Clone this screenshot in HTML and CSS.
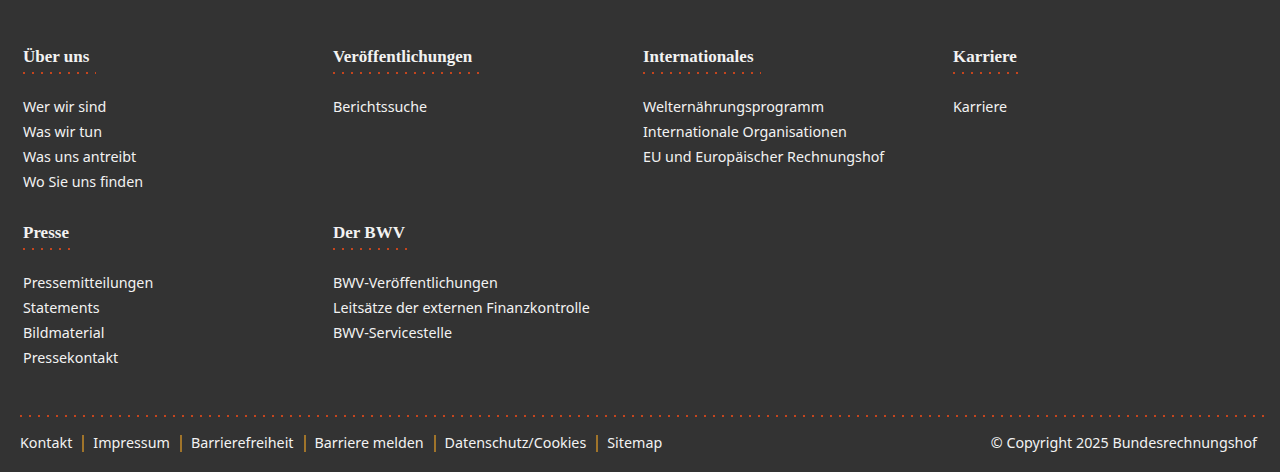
FILE: index.html
```html
<!DOCTYPE html>
<html lang="de">
<head>
  <meta charset="UTF-8">
  <meta name="viewport" content="width=device-width, initial-scale=1">
  <title>Footer</title>
  <link rel="stylesheet" href="styles.css">
</head>
<body>
  <footer class="footer">
    <div class="sitemap">
      <div class="col">
        <h3 class="col-title">Über uns</h3>
        <ul class="links">
          <li><a href="#">Wer wir sind</a></li>
          <li><a href="#">Was wir tun</a></li>
          <li><a href="#">Was uns antreibt</a></li>
          <li><a href="#">Wo Sie uns finden</a></li>
        </ul>
      </div>
      <div class="col">
        <h3 class="col-title">Veröffentlichungen</h3>
        <ul class="links">
          <li><a href="#">Berichtssuche</a></li>
        </ul>
      </div>
      <div class="col">
        <h3 class="col-title">Internationales</h3>
        <ul class="links">
          <li><a href="#">Welternährungsprogramm</a></li>
          <li><a href="#">Internationale Organisationen</a></li>
          <li><a href="#">EU und Europäischer Rechnungshof</a></li>
        </ul>
      </div>
      <div class="col">
        <h3 class="col-title">Karriere</h3>
        <ul class="links">
          <li><a href="#">Karriere</a></li>
        </ul>
      </div>
      <div class="col">
        <h3 class="col-title">Presse</h3>
        <ul class="links">
          <li><a href="#">Pressemitteilungen</a></li>
          <li><a href="#">Statements</a></li>
          <li><a href="#">Bildmaterial</a></li>
          <li><a href="#">Pressekontakt</a></li>
        </ul>
      </div>
      <div class="col">
        <h3 class="col-title">Der BWV</h3>
        <ul class="links">
          <li><a href="#">BWV-Veröffentlichungen</a></li>
          <li><a href="#">Leitsätze der externen Finanzkontrolle</a></li>
          <li><a href="#">BWV-Servicestelle</a></li>
        </ul>
      </div>
    </div>

    <div class="bottom">
      <ul class="legal">
        <li><a href="#">Kontakt</a></li>
        <li><a href="#">Impressum</a></li>
        <li><a href="#">Barrierefreiheit</a></li>
        <li><a href="#">Barriere melden</a></li>
        <li><a href="#">Datenschutz/Cookies</a></li>
        <li><a href="#">Sitemap</a></li>
      </ul>
      <p class="copyright">© Copyright 2025 Bundesrechnungshof</p>
    </div>
  </footer>
</body>
</html>
```

FILE: styles.css
```css
*{
  margin: 0;
  padding: 0;
}

body{
  background: #333333;
  color: #f2f2f2;
  font-family: "Noto Sans", "Open Sans", sans-serif;
  font-size: 14.3px;
}

a{
  color: #f2f2f2;
  text-decoration: none;
}

ul{
  list-style: none;
}

.footer{
  padding: 46px 15px 0 20px;
}

.sitemap{
  display: grid;
  grid-template-columns: repeat(4, 310px);
  row-gap: 28px;
  padding-left: 3px;
}

.col-title{
  display: inline-block;
  font-family: "Liberation Serif", serif;
  font-weight: bold;
  font-size: 17px;
  line-height: 22px;
  padding: 0 7px 6px 0;
  background: repeating-linear-gradient(to right, #c5451d 0 2px, transparent 2px 9px) left bottom / 100% 2px no-repeat;
}

.links{
  margin-top: 20px;
}

.links li{
  line-height: 25px;
}

.bottom{
  margin-top: 45px;
  padding: 15px 8px 16px 0;
  display: flex;
  justify-content: space-between;
  align-items: center;
  background: repeating-linear-gradient(to right, #c5451d 0 2px, transparent 2px 9px) left top / 100% 2px no-repeat;
  line-height: 25px;
}

.legal{
  display: flex;
  align-items: center;
}

.legal li + li::before{
  content: "";
  display: inline-block;
  width: 2px;
  height: 17px;
  vertical-align: -4px;
  background: #a0742a;
  margin: 0 9px 0 10px;
}
```
